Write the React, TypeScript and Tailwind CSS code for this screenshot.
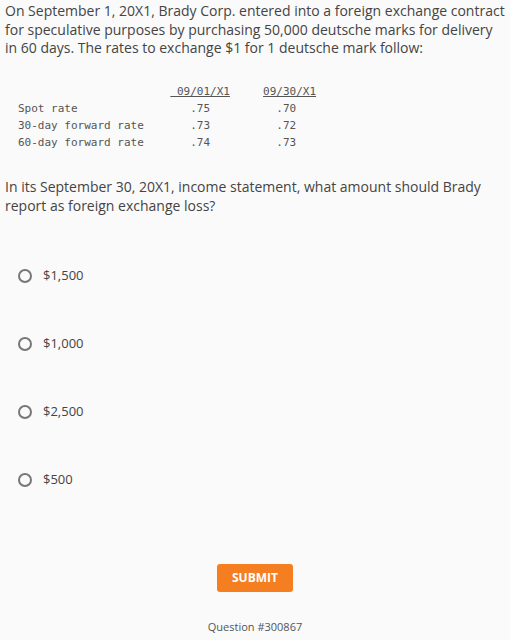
const rows = [
  { label: 'Spot rate', a: '.75', b: '.70' },
  { label: '30-day forward rate', a: '.73', b: '.72' },
  { label: '60-day forward rate', a: '.74', b: '.73' },
];

const options = ['$1,500', '$1,000', '$2,500', '$500'];

function pad(s: string, n: number) {
  return s + ' '.repeat(Math.max(0, n - s.length));
}

export default function App() {
  return (
    <div className="min-h-[640px] w-[510px] bg-[#fafafa] text-[#444] font-['Open_Sans',sans-serif]">
      <div className="px-[5px] pt-[2px]">
        <p className="text-[14px] leading-[18.5px]">
          On September 1, 20X1, Brady Corp. entered into a foreign exchange contract for speculative purposes by
          purchasing 50,000 deutsche marks for delivery in 60 days. The rates to exchange $1 for 1 deutsche mark
          follow:
        </p>

        <pre className="mt-[25px] ml-[13px] font-['DejaVu_Sans_Mono',monospace] text-[11px] leading-[17px] text-[#555]">
          {' '.repeat(23)}
          <span className="underline">{' 09/01/X1'}</span>
          {'     '}
          <span className="underline">09/30/X1</span>
          {'\n'}
          {rows.map((r) => pad(pad(r.label, 26) + r.a, 39) + r.b).join('\n')}
        </pre>

        <p className="mt-[26px] text-[14px] leading-[19px]">
          In its September 30, 20X1, income statement, what amount should Brady report as foreign exchange loss?
        </p>

        <div className="mt-[51px] flex flex-col gap-[48px] pl-[13px]">
          {options.map((o) => (
            <label key={o} className="flex h-[20px] items-center gap-[11px] text-[13px]">
              <span className="h-[14px] w-[14px] rounded-full border-2 border-[#777]" />
              <span>{o}</span>
            </label>
          ))}
        </div>

        <div className="mt-[74px] flex flex-col items-center">
          <button className="h-[28px] w-[76px] rounded-[3px] bg-[#f57e20] text-[12px] font-bold text-white">
            SUBMIT
          </button>
          <div className="mt-[27px] text-[11px] text-[#555]">Question #300867</div>
        </div>
      </div>
    </div>
  );
}
